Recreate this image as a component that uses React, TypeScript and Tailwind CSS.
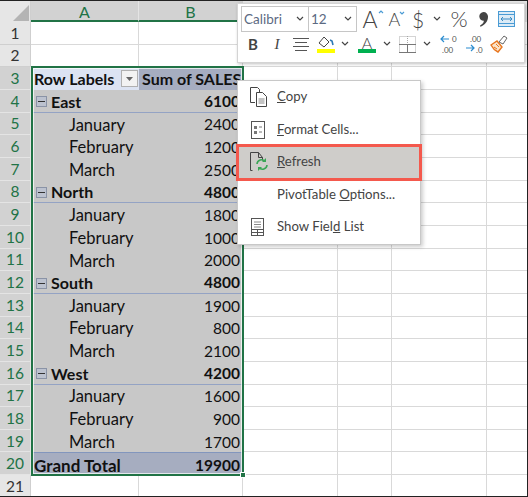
import React from 'react';

const FONT = '[font-family:Lato,sans-serif]';

type PivotRow = { label: string; value: string; kind: 'group' | 'item' | 'total' };

const pivotRows: PivotRow[] = [
  { label: 'East', value: '6100', kind: 'group' },
  { label: 'January', value: '2400', kind: 'item' },
  { label: 'February', value: '1200', kind: 'item' },
  { label: 'March', value: '2500', kind: 'item' },
  { label: 'North', value: '4800', kind: 'group' },
  { label: 'January', value: '1800', kind: 'item' },
  { label: 'February', value: '1000', kind: 'item' },
  { label: 'March', value: '2000', kind: 'item' },
  { label: 'South', value: '4800', kind: 'group' },
  { label: 'January', value: '1900', kind: 'item' },
  { label: 'February', value: '800', kind: 'item' },
  { label: 'March', value: '2100', kind: 'item' },
  { label: 'West', value: '4200', kind: 'group' },
  { label: 'January', value: '1600', kind: 'item' },
  { label: 'February', value: '900', kind: 'item' },
  { label: 'March', value: '1700', kind: 'item' },
  { label: 'Grand Total', value: '19900', kind: 'total' },
];

function RowNumber({ n, selected }: { n: number; selected: boolean }) {
  return (
    <div
      className={`w-[31px] shrink-0 flex items-center justify-center pt-px text-[15.5px] border-b border-r ${
        selected ? 'bg-[#d2d2d2] text-[#217346] border-[#e4e4e4]' : 'bg-[#e6e6e6] text-[#333333] border-[#cfcfcf]'
      }`}
    >
      {n}
    </div>
  );
}

function EmptyCols() {
  return (
    <>
      <div className="w-[95px] shrink-0 border-r border-b border-[#d9d9d9]" />
      <div className="w-[54px] shrink-0 border-r border-b border-[#d9d9d9]" />
      <div className="w-[95px] shrink-0 border-r border-b border-[#d9d9d9]" />
      <div className="flex-1 border-b border-[#d9d9d9]" />
    </>
  );
}

function SheetRow({ n, children }: { n: number; children: React.ReactNode }) {
  return (
    <div className="flex h-[22.67px]">
      <RowNumber n={n} selected={n >= 3 && n <= 20} />
      {children}
      <EmptyCols />
    </div>
  );
}

function Blank({ n }: { n: number }) {
  return (
    <SheetRow n={n}>
      <div className="w-[108px] shrink-0 border-r border-b border-[#d9d9d9]" />
      <div className="w-[104px] shrink-0 border-r border-b border-[#d9d9d9]" />
    </SheetRow>
  );
}

function MinusBox() {
  return (
    <span className="w-[11px] h-[11px] mr-[4px] shrink-0 border border-[#8a93a6] bg-[#bcc2cf] flex items-center justify-center">
      <span className="w-[7px] h-px bg-[#333333]" />
    </span>
  );
}

function DataRow({ row, n }: { row: PivotRow; n: number }) {
  const bold = row.kind !== 'item';
  const bg =
    row.kind === 'total'
      ? 'bg-[#a6adc0] border-t border-[#8296bd] pl-[3px]'
      : row.kind === 'group'
        ? 'bg-[#c8c8c8] border-b border-[#94a3c4] pl-[5px]'
        : 'bg-[#c8c8c8] pl-[5px]';
  const labelSize = row.kind === 'total' ? 'text-[17px]' : row.kind === 'group' ? 'text-[16px]' : 'text-[16.5px] pl-[33px]';
  return (
    <SheetRow n={n}>
      <div className={`w-[212px] shrink-0 flex items-center justify-between pt-[2px] pr-[3px] text-[#111111] ${bg} ${bold ? 'font-bold' : ''}`}>
        <span className={`flex items-center ${labelSize}`}>
          {row.kind === 'group' && <MinusBox />}
          {row.label}
        </span>
        <span className="text-[15.5px]">{row.value}</span>
      </div>
    </SheetRow>
  );
}

function Chevron({ className = '' }: { className?: string }) {
  return (
    <svg width="8" height="6" viewBox="0 0 8 6" className={className}>
      <path d="M1 1l3 3 3-3" fill="none" stroke="#444444" strokeWidth="1.2" />
    </svg>
  );
}

function Combo({ text, width }: { text: string; width: string }) {
  return (
    <div className={`${width} h-[26px] -mr-px flex items-center justify-between pl-[2px] pr-[4px] border border-[#c6c6c6] text-[13.5px] text-[#5c6a82]`}>
      <span>{text}</span>
      <Chevron />
    </div>
  );
}

function MiniToolbar() {
  return (
    <div className="absolute left-[237px] top-[2px] w-[288px] h-[60px] bg-white border border-[#d4d4d4] shadow-[1px_1px_3px_rgba(0,0,0,0.25)] pl-[3px] pt-[2px] text-[#444444]">
      <div className="flex items-center h-[26px]">
        <Combo text="Calibri" width="w-[68px]" />
        <Combo text="12" width="w-[49px]" />
        <span className="relative flex justify-center w-[18px] ml-[5px] text-[23px] font-light leading-none">
          A
          <svg width="6" height="4" viewBox="0 0 6 4" className="absolute right-[-5px] top-[2px]">
            <path d="M1 3l2-2 2 2" fill="none" stroke="#4a9bd4" strokeWidth="1.2" />
          </svg>
        </span>
        <span className="relative flex justify-center w-[15px] ml-[8px] text-[18px] font-light leading-none">
          A
          <svg width="6" height="4" viewBox="0 0 6 4" className="absolute right-[-3px] top-[1px]">
            <path d="M1 1l2 2 2-2" fill="none" stroke="#4a9bd4" strokeWidth="1.2" />
          </svg>
        </span>
        <span className="flex justify-center w-[10px] ml-[11px] text-[21px] font-light leading-none">$</span>
        <Chevron className="ml-[10px]" />
        <span className="flex justify-center w-[18px] ml-[9px] text-[22px] font-light leading-none">%</span>
        <svg width="11" height="15" viewBox="0 0 11 15" className="ml-[10px]">
          <path d="M5.500 0a4.500 4.500 0 0 1 4.500 4.700c0 4.600-3 8.200-7.500 10l-.6-1c2.400-1.300 3.800-3 4-4.900A4.400 4.400 0 0 1 5.500 0z" fill="#444444" />
        </svg>
        <svg width="17" height="16" viewBox="0 0 17 16" className="ml-[9px]">
          <rect x="0.5" y="0.5" width="16" height="15" fill="#dcebf6" stroke="#4a9bd4" />
          <path d="M0 3.500h17M0 12.500h17" stroke="#4a9bd4" />
          <path d="M3 8h11M5 6L3 8l2 2M12 6l2 2-2 2" fill="none" stroke="#3a8bc4" />
        </svg>
      </div>
      <div className="flex items-center h-[22px] mt-px">
        <span className="w-[14px] ml-[5px] text-[15px] font-bold text-center">B</span>
        <span className="w-[12px] ml-[11px] text-[15px] italic text-center [font-family:'Liberation_Serif',serif]">I</span>
        <svg width="16" height="15" viewBox="0 0 16 15" className="ml-[10px]">
          <path d="M0 1.500h16M2 5.500h12M0 9.500h16M2 13.500h12" stroke="#555555" strokeWidth="1.2" />
        </svg>
        <svg width="18" height="18" viewBox="0 0 18 18" className="ml-[8px]">
          <path d="M2 8l5-6 5 5-5 5z" fill="none" stroke="#444444" />
          <path d="M13 5l2 1 1 4" fill="none" stroke="#2b78b5" strokeWidth="1.6" />
          <rect x="0" y="14" width="18" height="4" fill="#ffff00" />
        </svg>
        <Chevron className="ml-[6px]" />
        <span className="relative w-[18px] h-[18px] ml-[9px] text-[16px] font-light leading-[15px] text-center">
          A
          <span className="absolute left-0 bottom-0 w-full h-[4px] bg-[#00b050]" />
        </span>
        <Chevron className="ml-[7px]" />
        <svg width="17" height="17" viewBox="0 0 17 17" className="ml-[8px]">
          <path d="M0.500 0.500h16v16h-16zM8.500 0v17M0 8.500h17" fill="none" stroke="#a8a8a8" strokeDasharray="1 1" />
          <path d="M0 16.500h17M8.500 8v8M0 8.500h17" stroke="#777777" />
        </svg>
        <Chevron className="ml-[7px]" />
        <svg width="19" height="18" viewBox="0 0 19 18" className="ml-[9px]">
          <path d="M1 4h8M4 1L1 4l3 3" fill="none" stroke="#2b8ccf" strokeWidth="1.2" />
          <text x="12" y="7" fontSize="8" fill="#555555" fontFamily="Lato, sans-serif">0</text>
          <text x="2" y="17.500" fontSize="8" fill="#555555" fontFamily="Lato, sans-serif">.00</text>
        </svg>
        <svg width="19" height="18" viewBox="0 0 19 18" className="ml-[6px]">
          <text x="5" y="7" fontSize="8" fill="#555555" fontFamily="Lato, sans-serif">.00</text>
          <path d="M1 13h8M6 10l3 3-3 3" fill="none" stroke="#2b8ccf" strokeWidth="1.2" />
          <text x="11" y="17.500" fontSize="8" fill="#555555" fontFamily="Lato, sans-serif">.0</text>
        </svg>
        <svg width="18" height="18" viewBox="0 0 18 18" className="ml-[6px]">
          <path d="M1 10l6-4 5 6-4 5C6 16 3 14 1 10z" fill="#fbe3c8" stroke="#e8761e" strokeWidth="1.4" />
          <path d="M4 12l3 2M6 9l3 3" stroke="#e8761e" />
          <path d="M9 7l5-6 3 2-4 6z" fill="none" stroke="#666666" />
        </svg>
      </div>
    </div>
  );
}

function CopyIcon() {
  return (
    <svg width="20" height="20" viewBox="0 0 20 20">
      <path d="M7 15.500H2.500V.5h7l2 2v3" fill="none" stroke="#444444" />
      <path d="M8.500 5.500h6l4 4v10h-10z" fill="white" stroke="#444444" />
      <path d="M10.500 12h6M10.500 14h6M10.500 16h6" stroke="#888888" />
    </svg>
  );
}

function FormatIcon() {
  return (
    <svg width="20" height="20" viewBox="0 0 20 20">
      <rect x="3.500" y="1.500" width="13" height="17" fill="white" stroke="#555555" />
      <path d="M6 6h3v3H6zM6 11h3v3H6z" fill="#777777" />
      <path d="M11 7h3M11 12h3" stroke="#777777" />
    </svg>
  );
}

function RefreshIcon() {
  return (
    <svg width="20" height="20" viewBox="0 0 20 20">
      <path d="M4.500 18.500h-2V.5h8l4 5v3M10.500.5v5h4" fill="none" stroke="#444444" />
      <g transform="translate(2 -1)">
        <path d="M7 13a4.500 4.500 0 0 1 8-2.500" fill="none" stroke="#3aa655" strokeWidth="1.6" />
        <path d="M16 7v4h-4z" fill="#3aa655" />
        <path d="M17 14a4.500 4.500 0 0 1-8 2.500" fill="none" stroke="#3aa655" strokeWidth="1.6" />
        <path d="M8 20v-4h4z" fill="#3aa655" />
      </g>
    </svg>
  );
}

function FieldListIcon() {
  return (
    <svg width="20" height="20" viewBox="0 0 20 20">
      <rect x="3.500" y="1.500" width="12" height="17" fill="white" stroke="#555555" />
      <path d="M6 5h7M6 7.500h7M6 10h7" stroke="#888888" />
      <path d="M3.500 12.500h12M3.500 15.500h12M9.500 12.500v6" stroke="#555555" />
    </svg>
  );
}

function MenuItem({ icon, children, active }: { icon?: React.ReactNode; children: React.ReactNode; active?: boolean }) {
  return (
    <div
      className={`flex items-center h-[32.5px] text-[13.2px] text-[#444444] ${
        active ? 'bg-[#cfcdca] outline-[3px] outline-[#f4594d] -outline-offset-[1px] relative' : ''
      }`}
    >
      <span className="w-[39px] shrink-0 flex items-center justify-center">{icon}</span>
      <span>{children}</span>
    </div>
  );
}

function ContextMenu() {
  return (
    <div className="absolute left-[237px] top-[79px] w-[184px] bg-white border border-[#c8c8c8] shadow-[2px_2px_4px_rgba(0,0,0,0.2)]">
      <MenuItem icon={<CopyIcon />}><u>C</u>opy</MenuItem>
      <MenuItem icon={<FormatIcon />}><u>F</u>ormat Cells...</MenuItem>
      <MenuItem icon={<RefreshIcon />} active><u>R</u>efresh</MenuItem>
      <MenuItem>PivotTable <u>O</u>ptions...</MenuItem>
      <MenuItem icon={<FieldListIcon />}>Show Fiel<u>d</u> List</MenuItem>
    </div>
  );
}

export default function App() {
  return (
    <div className={`${FONT} relative w-[528px] h-[497px] overflow-hidden bg-white border-t border-b border-r border-[#222222]`}>
      {/* column headers */}
      <div className="flex h-[21px] text-[16px] text-[#217346]">
        <div className="w-[31px] shrink-0 bg-[#e6e6e6] border-r border-[#cfcfcf] relative">
          <svg width="16" height="16" viewBox="0 0 16 16" className="absolute left-[13px] top-[4px]">
            <path d="M16 0v16H0z" fill="#b4b4b4" />
          </svg>
        </div>
        <div className="w-[108px] shrink-0 flex items-center justify-center pt-[2px] bg-[#d2d2d2] border-r border-[#e4e4e4] border-b-2 border-b-[#217346]">A</div>
        <div className="w-[104px] shrink-0 flex items-center justify-center pt-[2px] bg-[#d2d2d2] border-r border-[#cfcfcf] border-b-2 border-b-[#217346]">B</div>
        <div className="flex-1 bg-[#e6e6e6]" />
      </div>

      <Blank n={1} />
      <Blank n={2} />

      <SheetRow n={3}>
        <div className="w-[108px] shrink-0 flex items-center justify-between pl-[3px] pr-px bg-[#dce3f2] text-[16px] font-bold text-[#111111]">
          <span className="pt-px">Row Labels</span>
          <span className="w-[17px] h-[17px] bg-[#f2f2f2] border border-[#b0b0b0] flex items-center justify-center">
            <svg width="7" height="4" viewBox="0 0 7 4">
              <path d="M0 0h7L3.500 4z" fill="#666666" />
            </svg>
          </span>
        </div>
        <div className="w-[104px] shrink-0 flex items-center pl-[3px] pt-px bg-[#a6adc0] text-[16px] font-bold text-[#111111] whitespace-nowrap overflow-hidden">
          Sum of SALES
        </div>
      </SheetRow>

      {pivotRows.map((row, i) => (
        <DataRow key={i} row={row} n={i + 4} />
      ))}

      <Blank n={21} />

      {/* selection outline */}
      <div className="absolute left-[31px] top-[65px] w-[213px] h-[410px] border-2 border-[#217346] pointer-events-none">
        <div className="w-full h-full border border-white/70" />
        <div className="absolute right-[-4px] bottom-[-4px] w-[6px] h-[6px] bg-[#217346] border border-white" />
      </div>

      <MiniToolbar />
      <ContextMenu />
    </div>
  );
}
